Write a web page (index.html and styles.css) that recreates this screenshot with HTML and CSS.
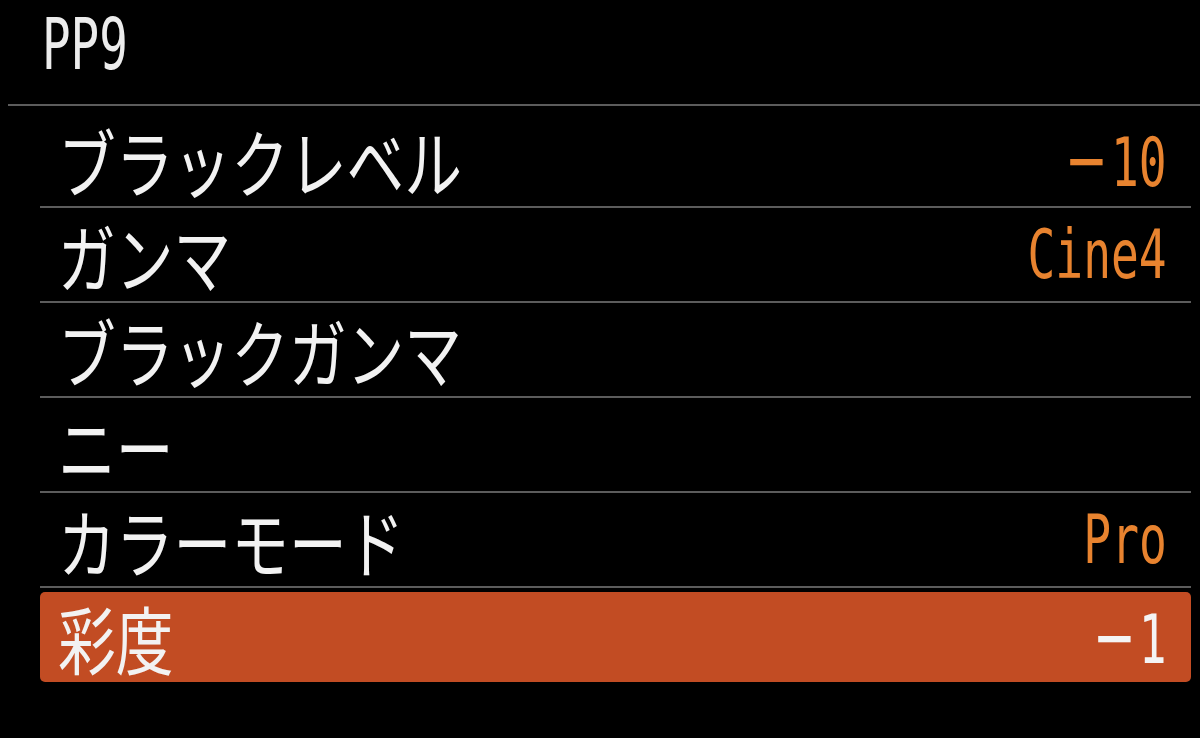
FILE: index.html
```html
<!DOCTYPE html>
<html lang="ja">
<head>
<meta charset="utf-8">
<title>PP9</title>
<link rel="stylesheet" href="styles.css">
</head>
<body>
<div class="screen">
  <header class="header"><span class="title">PP9</span></header>
  <ul class="list">
    <li class="row"><span class="label">ブラックレベル</span><span class="value"><span class="minus">−</span>10</span></li>
    <li class="row"><span class="label">ガンマ</span><span class="value">Cine4</span></li>
    <li class="row"><span class="label">ブラックガンマ</span><span class="value"></span></li>
    <li class="row"><span class="label">ニー</span><span class="value"></span></li>
    <li class="row"><span class="label">カラーモード</span><span class="value">Pro</span></li>
    <li class="row selected"><span class="label">彩度</span><span class="value"><span class="minus">−</span>1</span></li>
  </ul>
</div>
</body>
</html>
```
FILE: styles.css
```css
html, body {
  margin: 0;
  padding: 0;
  background: #000;
}
.screen {
  width: 1200px;
  height: 738px;
  background: #000;
  overflow: hidden;
  font-family: "Noto Sans CJK JP", "Noto Sans", sans-serif;
}
.header {
  margin-left: 8px;
  height: 104px;
  border-bottom: 2px solid #5c5c5c;
  display: flex;
  align-items: center;
  padding-left: 34px;
}
.title {
  display: inline-block;
  font-family: "DejaVu Sans Mono", monospace;
  font-size: 72px;
  line-height: 1;
  color: #ececec;
  transform: scaleX(0.66);
  transform-origin: left center;
  margin-top: -16px;
}
.list {
  list-style: none;
  margin: 0 9px 0 40px;
  padding: 7px 0 0 0;
}
.row {
  height: 93px;
  border-bottom: 2px solid #5c5c5c;
  display: flex;
  align-items: center;
  justify-content: space-between;
  padding: 0 24px 0 18px;
}
.label {
  display: inline-block;
  font-size: 74px;
  line-height: 1;
  color: #f2f2f2;
  transform: scaleX(0.78);
  transform-origin: left center;
  white-space: nowrap;
}
.value {
  display: inline-block;
  font-family: "DejaVu Sans Mono", monospace;
  font-size: 68px;
  line-height: 1;
  color: #e8832f;
  transform: scaleX(0.68);
  transform-origin: right center;
  white-space: nowrap;
}
.minus {
  font-family: "DejaVu Sans", sans-serif;
  font-size: 76px;
  line-height: 1;
  margin-right: 4px;
}
.row.selected {
  margin-top: 4px;
  height: 90px;
  border-bottom: none;
  background: #c24c23;
  border-radius: 5px;
}
.row.selected .value {
  color: #f4f4f4;
}
```
